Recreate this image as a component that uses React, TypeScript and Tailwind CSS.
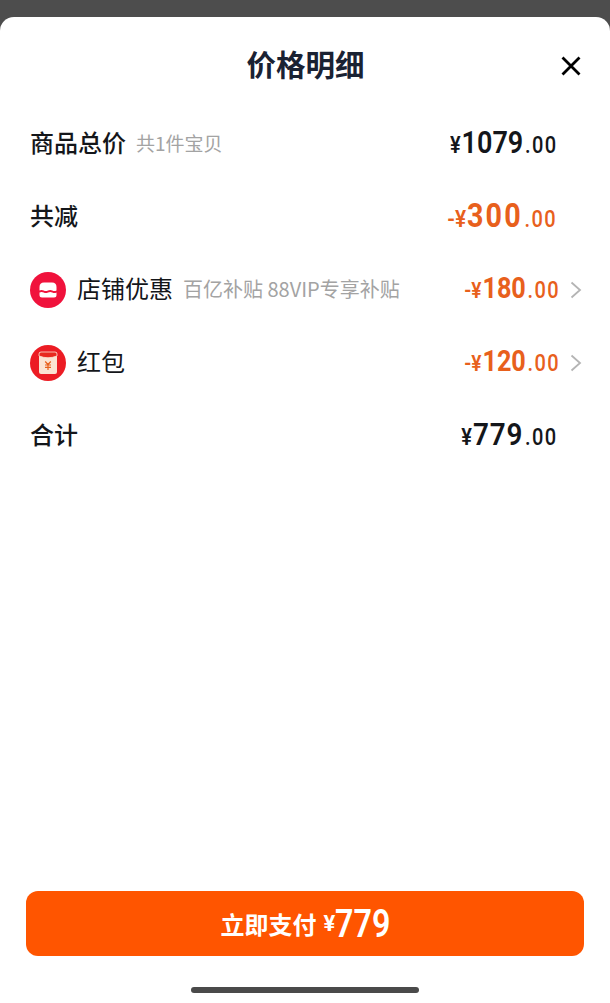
const cjk = "font-['Noto_Sans_CJK_SC','Noto_Sans',sans-serif]";
const num = "font-['Roboto',sans-serif]";

function Price({
  sign,
  value,
  orange,
  size = "text-[31px] tracking-[0px]",
  signSize = "text-[23px]",
}: {
  sign: string;
  value: string;
  orange?: boolean;
  size?: string;
  signSize?: string;
}) {
  return (
    <div className={`-mr-[1px] flex origin-right scale-x-[0.87] items-baseline pb-[3px] font-semibold ${num} ${orange ? "text-[#e8601c]" : "text-[#14161a]"}`}>
      <span className={`mr-[1px] leading-none ${signSize}`}>{sign}</span>
      <span className={`${size} leading-none`}>{value}</span>
      <span className="ml-[2px] text-[23px] font-medium leading-none tracking-[1.6px]">.00</span>
    </div>
  );
}

function Chevron() {
  return (
    <svg viewBox="0 0 12 18" className="ml-[11px] h-[18px] w-[12px]" fill="none" stroke="#b4b4b4" strokeWidth="1.8">
      <path d="M1.5 1.5 L10 9 L1.5 16.5" />
    </svg>
  );
}

function ShopIcon() {
  return (
    <svg viewBox="0 0 36 36" className="h-9 w-9 shrink-0">
      <circle cx="18" cy="18" r="18" fill="#f0123c" />
      <path d="M9.5 18.5 V15 Q9.5 10.5 14 10.5 H22 Q26.5 10.5 26.5 15 V18.5 q-2.1 1.2 -4.2 0 t-4.3 0 t-4.3 0 t-4.2 0 Z" fill="#fff" />
      <path d="M9.5 20.5 q2.1 -1.2 4.2 0 t4.3 0 t4.3 0 t4.2 0 V23 Q26.5 25.5 24 25.5 H12 Q9.5 25.5 9.5 23 Z" fill="#fff" />
    </svg>
  );
}

function PacketIcon() {
  return (
    <svg viewBox="0 0 36 36" className="h-9 w-9 shrink-0">
      <circle cx="18" cy="18" r="18" fill="#ec1c24" />
      <rect x="9" y="7" width="18" height="22" rx="2" fill="#fbe3d2" />
      <path d="M9 9 Q9 7 11 7 H25 Q27 7 27 9 V11 Q18 14.5 9 11 Z" fill="#e8291f" stroke="#fbe3d2" strokeWidth="0.8" />
      <path d="M15.2 16.5 L18 19.5 L20.8 16.5 M15 20 H21 M15 22.3 H21 M18 19.5 V25" fill="none" stroke="#e8601c" strokeWidth="1.2" />
    </svg>
  );
}

export default function App() {
  return (
    <div className={`flex h-[1003px] w-[610px] flex-col overflow-hidden bg-[#4d4d4d] pt-[17px] ${cjk}`}>
      <div className="flex flex-1 flex-col rounded-t-[14px] bg-white">
        <div className="relative flex h-[90px] shrink-0 items-center justify-center pl-[1px] pt-[3px]">
          <h1 className="text-[29.5px] font-bold leading-none text-[#1a2233]">价格明细</h1>
          <svg viewBox="0 0 20 20" className="absolute right-[29px] top-[39px] h-5 w-5" fill="none" stroke="#000" strokeWidth="2.8">
            <path d="M1.5 1.5 L18.5 18.5 M18.5 1.5 L1.5 18.5" />
          </svg>
        </div>

        <div className="flex h-[73px] items-center justify-between pl-[30px] pr-[54px]">
          <div className="flex items-center pb-[3px]">
            <span className="text-[24px] font-medium leading-none text-[#14161a]">商品总价</span>
            <span className="ml-[10px] text-[19px] leading-none text-[#a3a3a3]">共1件宝贝</span>
          </div>
          <Price sign="¥" value="1079" />
        </div>

        <div className="flex h-[73px] items-center justify-between pl-[30px] pr-[54px]">
          <span className="pb-[3px] text-[24px] font-medium leading-none text-[#14161a]">共减</span>
          <Price sign="-¥" value="300" orange signSize="text-[24px]" size="text-[33px] font-bold tracking-[2.4px]" />
        </div>

        <div className="flex h-[73px] items-center justify-between pl-[30px] pr-[28px]">
          <div className="flex items-center">
            <ShopIcon />
            <span className="ml-[11px] pb-[3px] text-[24px] leading-none text-[#14161a]">店铺优惠</span>
            <span className="ml-[10px] pb-[2px] text-[20px] leading-none text-[#a3a3a3]">百亿补贴 88VIP专享补贴</span>
          </div>
          <div className="flex items-center">
            <Price sign="-¥" value="180" orange signSize="text-[22px]" size="text-[29px] font-bold" />
            <Chevron />
          </div>
        </div>

        <div className="flex h-[73px] items-center justify-between pl-[30px] pr-[28px]">
          <div className="flex items-center">
            <PacketIcon />
            <span className="ml-[11px] pb-[3px] text-[24px] leading-none text-[#14161a]">红包</span>
          </div>
          <div className="flex items-center">
            <Price sign="-¥" value="120" orange signSize="text-[22px]" size="text-[29px] font-bold" />
            <Chevron />
          </div>
        </div>

        <div className="flex h-[73px] items-center justify-between pl-[30px] pr-[54px]">
          <span className="pb-[3px] text-[24px] font-medium leading-none text-[#14161a]">合计</span>
          <Price sign="¥" value="779" size="text-[32px] tracking-[1px]" />
        </div>

        <div className="mt-auto px-[26px]">
          <button className="flex h-[65px] w-full items-center justify-center rounded-[12px] bg-[#ff5500] text-white">
            <span className="text-[24px] font-bold leading-none">立即支付</span>
            <span className={`ml-[7px] text-[22px] font-bold leading-none ${num}`}>¥</span>
            <span className={`inline-block w-[54px] origin-left scale-x-[0.85] text-[38px] font-semibold leading-none ${num}`}>779</span>
          </button>
        </div>

        <div className="flex justify-center pb-[10px] pt-[31px]">
          <div className="h-[6px] w-[228px] rounded-full bg-[#4a4a4a]" />
        </div>
      </div>
    </div>
  );
}
